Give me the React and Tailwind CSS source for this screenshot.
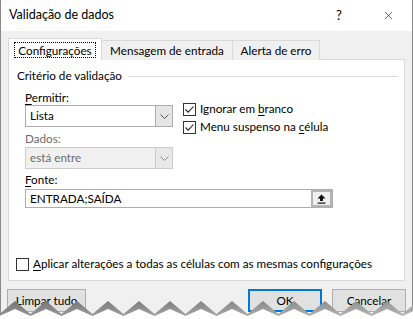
import { X } from "lucide-react";

const font = { fontFamily: 'Lato, "Noto Sans", sans-serif' };

const U = ({ children }) => <span className="underline underline-offset-2">{children}</span>;

const Check = ({ checked }) => (
  <div className="w-[13px] h-[13px] border border-[#333333] bg-white flex items-center justify-center shrink-0">
    {checked && (
      <svg width="11" height="11" viewBox="0 0 11 11">
        <path d="M1.5 5.5 L4.2 8.2 L9.5 2.5" fill="none" stroke="#222" strokeWidth="1.1" />
      </svg>
    )}
  </div>
);

const Chevron = ({ color = "#555" }) => (
  <svg width="9" height="5" viewBox="0 0 9 5">
    <path d="M0.5 0.5 L4.5 4.5 L8.5 0.5" fill="none" stroke={color} strokeWidth="1" />
  </svg>
);

const Select = ({ value, disabled }) => (
  <div
    className={`w-[148px] h-[22px] flex border ${
      disabled ? "border-[#cccccc] bg-[#f0f0f0] text-[#6d6d6d]" : "border-[#adadad] bg-white text-black"
    }`}
  >
    <div className="flex-1 flex items-center pl-[4px]">{value}</div>
    <div
      className={`w-[17px] h-full flex items-center justify-center border-l ${
        disabled ? "border-[#cccccc] bg-[#e8e8e8]" : "border-[#adadad] bg-[#e5e5e5]"
      }`}
    >
      <Chevron color={disabled ? "#888" : "#555"} />
    </div>
  </div>
);

// torn bottom edge of the screenshot
const Tear = () => {
  const peaks = [];
  for (let i = -1; i < 15; i++) peaks.push(15 + i * 31);
  const shadow =
    "M0 20 " + peaks.map((p) => `L${p - 15.5} 15 L${p} 2 L${p + 15.5} 15`).join(" ") + " L413 20 Z";
  const white =
    "M0 20 " + peaks.map((p) => `L${p - 15.5} 17 L${p} 10 L${p + 15.5} 17`).join(" ") + " L413 20 Z";
  return (
    <svg className="absolute left-0 bottom-0" width="413" height="20" viewBox="0 0 413 20">
      <defs>
        <linearGradient id="tg" x1="0" y1="0" x2="1" y2="1">
          <stop offset="0" stopColor="#6f6f6f" />
          <stop offset="1" stopColor="#c4c4c4" />
        </linearGradient>
      </defs>
      <path d={shadow} fill="url(#tg)" />
      <path d={white} fill="#ffffff" />
    </svg>
  );
};

export default function App() {
  return (
    <div className="w-[413px] h-[319px] relative overflow-hidden bg-white text-[11.7px] text-black whitespace-nowrap" style={font}>
      <div className="h-full flex flex-col border-x border-[#8a8a8a]">
        {/* Title bar */}
        <div className="h-[31px] shrink-0 bg-white flex items-center pl-[8px]">
          <span className="text-[12.5px]">Validação de dados</span>
          <span className="ml-auto w-[12px] text-[13px] mr-[37px] text-center">?</span>
          <X size={13} strokeWidth={1.1} className="mr-[17px]" />
        </div>

        {/* Body */}
        <div className="flex-1 bg-[#f0f0f0] pt-[7px]">
          {/* Tabs */}
          <div className="flex items-end pl-[7px] h-[22px] relative z-10">
            <div className="w-[94px] h-[22px] bg-white border-x border-t border-[#d9d9d9] flex items-center justify-center">
              <span className="border border-dotted border-black px-[3px] leading-[14px]">Configurações</span>
            </div>
            <div className="w-[132px] -ml-px h-[20px] border border-b-0 border-[#d9d9d9] bg-[#f0f0f0] flex items-center justify-center">
              Mensagem de entrada
            </div>
            <div className="w-[88px] -ml-px h-[20px] border border-b-0 border-[#d9d9d9] bg-[#f0f0f0] flex items-center justify-center">
              Alerta de erro
            </div>
          </div>

          {/* Panel */}
          <div className="ml-[7px] -mt-px w-[397px] h-[222px] bg-white border border-[#d9d9d9] pl-[8px]">
            <div className="mt-[8px] h-[16px] flex items-center gap-[6px] pr-[6px]">
              <span>Critério de validação</span>
              <div className="flex-1 h-px bg-[#dcdcdc]" />
            </div>

            <div className="pl-[8px]">
              <div className="flex">
                <div className="w-[148px]">
                  <div className="mt-[5px] h-[16px] leading-[16px]">
                    <U>P</U>ermitir:
                  </div>
                  <Select value="Lista" />
                  <div className="mt-[3px] h-[16px] leading-[16px] text-[#6d6d6d]">Dados:</div>
                  <div className="mt-px">
                    <Select value="está entre" disabled />
                  </div>
                </div>
                <div className="ml-[10px] pt-[17px] flex flex-col gap-[2px]">
                  <div className="h-[16px] flex items-center gap-[4px]">
                    <Check checked />
                    <span>
                      Ignorar em <U>b</U>ranco
                    </span>
                  </div>
                  <div className="h-[16px] flex items-center gap-[4px]">
                    <Check checked />
                    <span>
                      Menu suspenso na <U>c</U>élula
                    </span>
                  </div>
                </div>
              </div>

              <div className="mt-[2px] h-[16px] leading-[16px]">
                <U>F</U>onte:
              </div>
              <div className="mt-[2px] w-[308px] h-[19px] flex border border-[#adadad] bg-white">
                <div className="flex-1 flex items-center pl-[4px]">ENTRADA;SAÍDA</div>
                <div className="w-[21px] h-full border-2 border-[#b4b4b4] bg-[#f0f0f0] flex items-center justify-center">
                  <svg width="9" height="10" viewBox="0 0 9 10">
                    <path d="M4.5 0.5 L8.5 4.5 L6 4.5 L6 7 L3 7 L3 4.5 L0.5 4.5 Z" fill="#111" />
                    <rect x="0.5" y="8.5" width="8" height="1.2" fill="#111" />
                  </svg>
                </div>
              </div>
            </div>

            <div className="-ml-px mt-[48px] h-[16px] flex items-center gap-[4px]">
              <div className="w-[13px] h-[13px] border border-[#333333] bg-white" />
              <span>
                <U>A</U>plicar alterações a todas as células com as mesmas configurações
              </span>
            </div>
          </div>

          {/* Buttons */}
          <div className="mt-[8px] pl-[6px] flex">
            <button className="w-[79px] h-[23px] bg-[#e1e1e1] border border-[#adadad] flex items-center justify-center">
              <span>
                <U>L</U>impar tudo
              </span>
            </button>
            <button className="ml-auto w-[74px] h-[23px] bg-[#e1e1e1] border-2 border-[#0078d7] flex items-center justify-center">
              OK
            </button>
            <button className="ml-[10px] mr-[6px] w-[74px] h-[23px] bg-[#e1e1e1] border border-[#adadad] flex items-center justify-center">
              Cancelar
            </button>
          </div>
        </div>
      </div>
      <Tear />
    </div>
  );
}
